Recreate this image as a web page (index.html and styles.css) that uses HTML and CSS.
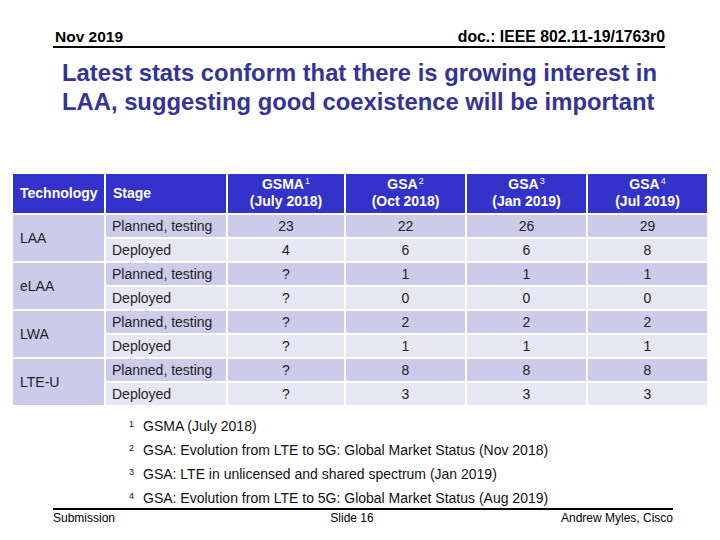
FILE: index.html
```html
<!DOCTYPE html>
<html>
<head>
<meta charset="utf-8">
<link rel="stylesheet" href="styles.css">
</head>
<body>
<div class="slide">
  <header class="top">
    <span>Nov 2019</span>
    <span>doc.: IEEE 802.11-19/1763r0</span>
  </header>
  <h1 class="title">Latest stats conform that there is growing interest in LAA, suggesting good coexistence will be important</h1>
  <div class="grid">
    <div class="hd left"><span>Technology</span></div>
    <div class="hd left"><span>Stage</span></div>
    <div class="hd"><span>GSMA<sup>1</sup><br>(July 2018)</span></div>
    <div class="hd"><span>GSA<sup>2</sup><br>(Oct 2018)</span></div>
    <div class="hd"><span>GSA<sup>3</sup><br>(Jan 2019)</span></div>
    <div class="hd"><span>GSA<sup>4</sup><br>(Jul 2019)</span></div>

    <div class="tech">LAA</div>
    <div class="c dk st">Planned, testing</div><div class="c dk">23</div><div class="c dk">22</div><div class="c dk">26</div><div class="c dk">29</div>
    <div class="c lt st">Deployed</div><div class="c lt">4</div><div class="c lt">6</div><div class="c lt">6</div><div class="c lt">8</div>

    <div class="tech">eLAA</div>
    <div class="c dk st">Planned, testing</div><div class="c dk">?</div><div class="c dk">1</div><div class="c dk">1</div><div class="c dk">1</div>
    <div class="c lt st">Deployed</div><div class="c lt">?</div><div class="c lt">0</div><div class="c lt">0</div><div class="c lt">0</div>

    <div class="tech">LWA</div>
    <div class="c dk st">Planned, testing</div><div class="c dk">?</div><div class="c dk">2</div><div class="c dk">2</div><div class="c dk">2</div>
    <div class="c lt st">Deployed</div><div class="c lt">?</div><div class="c lt">1</div><div class="c lt">1</div><div class="c lt">1</div>

    <div class="tech">LTE-U</div>
    <div class="c dk st">Planned, testing</div><div class="c dk">?</div><div class="c dk">8</div><div class="c dk">8</div><div class="c dk">8</div>
    <div class="c lt st">Deployed</div><div class="c lt">?</div><div class="c lt">3</div><div class="c lt">3</div><div class="c lt">3</div>
  </div>
  <ol class="notes">
    <li><span class="n">1</span>GSMA (July 2018)</li>
    <li><span class="n">2</span>GSA: Evolution from LTE to 5G: Global Market Status (Nov 2018)</li>
    <li><span class="n">3</span>GSA: LTE in unlicensed and shared spectrum (Jan 2019)</li>
    <li><span class="n">4</span>GSA: Evolution from LTE to 5G: Global Market Status (Aug 2019)</li>
  </ol>
  <footer class="bottom">
    <span class="f-l">Submission</span>
    <span class="f-c">Slide 16</span>
    <span class="f-r">Andrew Myles, Cisco</span>
  </footer>
</div>
</body>
</html>
```
FILE: styles.css
```css
html, body {
  margin: 0;
  padding: 0;
  background: #ffffff;
}
body {
  font-family: "Liberation Sans", Arial, sans-serif;
  color: #000;
}
.slide {
  width: 720px;
  height: 540px;
  overflow: hidden;
  display: flex;
  flex-direction: column;
}
.top {
  margin: 28px 55px 0 53px;
  padding: 0 0 1px 2px;
  display: flex;
  justify-content: space-between;
  font-size: 15.5px;
  font-weight: bold;
  line-height: 17px;
  border-bottom: 2px solid #000;
}
.top span:last-child {
  font-size: 15.8px;
}
.title {
  margin: 10px 40px 0 62px;
  font-size: 23.8px;
  line-height: 29px;
  font-weight: bold;
  color: #333399;
}
.grid {
  margin: 58px 0 0 13px;
  display: grid;
  grid-template-columns: 91px 120px 116px 119px 119px 119px;
  grid-template-rows: 39px repeat(8, 22px);
  gap: 2px;
  font-size: 14px;
}
.hd {
  background: #3333cc;
  color: #fff;
  font-weight: bold;
  display: flex;
  align-items: center;
  justify-content: center;
  text-align: center;
  line-height: 17px;
  padding-bottom: 1px;
}
.hd.left {
  justify-content: flex-start;
  padding-left: 7px;
}
.hd sup {
  font-size: 9px;
  vertical-align: 5px;
  line-height: 0;
  font-weight: normal;
  margin-left: 1px;
}
.tech {
  grid-row: span 2;
  background: #ccccea;
  display: flex;
  align-items: center;
  padding-left: 7px;
  color: #222;
}
.c {
  display: flex;
  align-items: center;
  justify-content: center;
  color: #222;
}
.c.st {
  justify-content: flex-start;
  padding-left: 6px;
}
.dk { background: #ccccea; }
.lt { background: #e7e7f4; }
.notes {
  list-style: none;
  margin: 9px 0 0 129px;
  padding: 0;
  font-size: 14px;
  line-height: 24px;
  color: #111;
}
.notes li {
  height: 24px;
}
.notes li:last-child {
  height: 22px;
}
.notes .n {
  display: inline-block;
  width: 14px;
  font-size: 9px;
  line-height: 9px;
  vertical-align: 4px;
}
.bottom {
  margin: 0 47px 0 53px;
  border-top: 2px solid #000;
  display: flex;
  justify-content: space-between;
  font-size: 12px;
  line-height: 14px;
  padding-top: 1px;
}
.f-c {
  margin-left: 28px;
}
```
